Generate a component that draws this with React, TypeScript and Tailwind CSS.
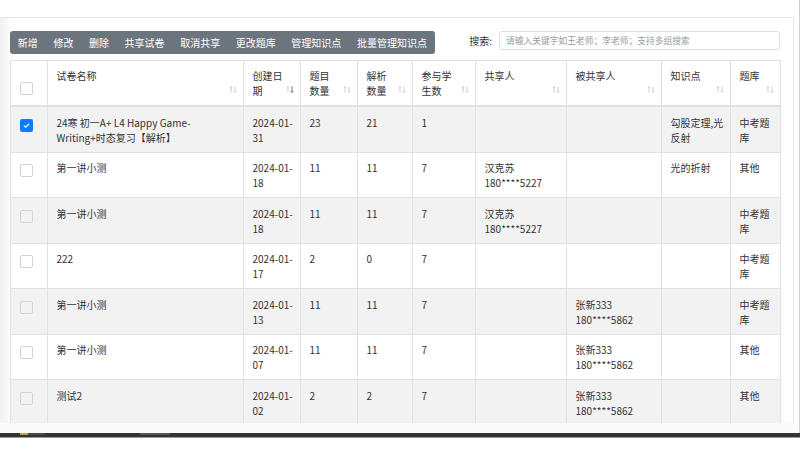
import React from 'react';

const FONT = "font-['Noto_Sans_CJK_SC','Noto_Sans',sans-serif]";

const actions = ['新增', '修改', '删除', '共享试卷', '取消共享', '更改题库', '管理知识点', '批量管理知识点'];

interface Column {
  title: string[];
  width: number;
  active?: boolean;
}

const columns: Column[] = [
  { title: ['试卷名称'], width: 196 },
  { title: ['创建日', '期'], width: 57, active: true },
  { title: ['题目', '数量'], width: 57 },
  { title: ['解析', '数量'], width: 55 },
  { title: ['参与学', '生数'], width: 63 },
  { title: ['共享人'], width: 91 },
  { title: ['被共享人'], width: 95 },
  { title: ['知识点'], width: 69 },
  { title: ['题库'], width: 50 },
];

interface Row {
  checked?: boolean;
  name: string[];
  date: string;
  questions: string;
  analyses: string;
  students: string;
  sharer?: string[];
  sharee?: string[];
  points?: string[];
  bank: string[];
}

const rows: Row[] = [
  {
    checked: true,
    name: ['24寒 初一A+ L4 Happy Game-', 'Writing+时态复习【解析】'],
    date: '2024-01-31',
    questions: '23',
    analyses: '21',
    students: '1',
    points: ['勾股定理,光', '反射'],
    bank: ['中考题', '库'],
  },
  { name: ['第一讲小测'], date: '2024-01-18', questions: '11', analyses: '11', students: '7', sharer: ['汉克苏', '180****5227'], points: ['光的折射'], bank: ['其他'] },
  { name: ['第一讲小测'], date: '2024-01-18', questions: '11', analyses: '11', students: '7', sharer: ['汉克苏', '180****5227'], bank: ['中考题', '库'] },
  { name: ['222'], date: '2024-01-17', questions: '2', analyses: '0', students: '7', bank: ['中考题', '库'] },
  { name: ['第一讲小测'], date: '2024-01-13', questions: '11', analyses: '11', students: '7', sharee: ['张新333', '180****5862'], bank: ['中考题', '库'] },
  { name: ['第一讲小测'], date: '2024-01-07', questions: '11', analyses: '11', students: '7', sharee: ['张新333', '180****5862'], bank: ['其他'] },
  { name: ['测试2'], date: '2024-01-02', questions: '2', analyses: '2', students: '7', sharee: ['张新333', '180****5862'], bank: ['其他'] },
];

function SortIcon({ active }: { active?: boolean }) {
  return (
    <svg width="8" height="7" viewBox="0 0 8 7" className="shrink-0">
      <g fill="none" strokeWidth="0.8" stroke="#c4c4c4">
        <path d="M2 0.6V6.6M0.7 1.9L2 0.6L3.3 1.9" />
      </g>
      <g fill="none" strokeWidth="0.8" stroke={active ? '#555' : '#c4c4c4'}>
        <path d="M6 0.4V6.4M4.7 5.1L6 6.4L7.3 5.1" />
      </g>
    </svg>
  );
}

function Checkbox({ checked }: { checked?: boolean }) {
  if (checked) {
    return (
      <span className="flex w-[13px] h-[13px] items-center justify-center rounded-[2px] bg-[#0a7cff]">
        <svg width="9" height="9" viewBox="0 0 9 9">
          <path d="M2 4.6L3.7 6.2L7 2.9" fill="none" stroke="#fff" strokeWidth="1.3" />
        </svg>
      </span>
    );
  }
  return <span className="block w-[13px] h-[13px] rounded-[2px] border border-[#d3d3d3]" />;
}

function Lines({ lines }: { lines?: string[] }) {
  if (!lines) return null;
  return (
    <>
      {lines.map((l) => (
        <div key={l} className="whitespace-nowrap">
          {l}
        </div>
      ))}
    </>
  );
}

export default function App() {
  const td = 'border border-[#dee2e6] align-top px-[8.5px] pt-[7.5px] pb-[7px] leading-[15px]';

  return (
    <div className={`w-[800px] h-[453px] flex flex-col overflow-hidden bg-white text-[10px] text-[#333] ${FONT}`}>
      {/* top strip */}
      <div className="h-[18px] shrink-0 flex">
        <div className="w-[794px] border-b border-[#e6e6e6]" />
        <div className="flex-1 border-r border-[#cfcfcf]" />
      </div>

      <div className="h-[405px] shrink-0 flex overflow-hidden">
        <div className="w-[9px] shrink-0 bg-gradient-to-r from-[#f1f1f1] to-[#fafafa]" />

        <div className="w-[785px] shrink-0 pl-px pr-[13px] pt-[13px] border-r border-[#e6e6e6] overflow-hidden">
          <div className="flex items-start justify-between">
            <div className="flex h-[23px] items-center rounded-[3px] bg-[#6c757d] text-white">
              {actions.map((a) => (
                <button key={a} className="px-[7.8px] leading-[23px] whitespace-nowrap">
                  {a}
                </button>
              ))}
            </div>
            <div className="flex items-center gap-[7px]">
              <span>搜索:</span>
              <div className="w-[281px] h-[19px] flex items-center rounded-[3px] border border-[#dcdfe3] px-[6px] text-[8.75px] text-[#9a9a9a]">
                请输入关键字如王老师；李老师；支持多组搜索
              </div>
            </div>
          </div>

          <table className="mt-[6px] w-[770px] table-fixed border-collapse">
            <colgroup>
              <col className="w-[37px]" />
              {columns.map((c) => (
                <col key={c.title.join('')} style={{ width: c.width }} />
              ))}
            </colgroup>
            <thead>
              <tr className="border-b-2 border-[#dee2e6]">
                <th className="border border-[#dee2e6] border-b-2 align-bottom pb-[10px] pl-[9px]">
                  <Checkbox />
                </th>
                {columns.map((c) => (
                  <th
                    key={c.title.join('')}
                    className="border border-[#dee2e6] border-b-2 align-top font-normal text-left pl-[8.5px] pr-[6px] py-[7px] leading-[15px]"
                  >
                    <div className="flex justify-between h-[30px]">
                      <div>
                        <Lines lines={c.title} />
                      </div>
                      <div className="self-end mb-[5px]">
                        <SortIcon active={c.active} />
                      </div>
                    </div>
                  </th>
                ))}
              </tr>
            </thead>
            <tbody>
              {rows.map((r, i) => (
                <tr key={i} className={i % 2 === 0 ? 'bg-[#f2f2f2]' : 'bg-white'}>
                  <td className="border border-[#dee2e6] align-top pl-[9px] pt-[11.5px]">
                    <Checkbox checked={r.checked} />
                  </td>
                  <td className={td}>
                    <Lines lines={r.name} />
                  </td>
                  <td className={td}>
                    <Lines lines={[r.date.slice(0, 8), r.date.slice(8)]} />
                  </td>
                  <td className={td}>{r.questions}</td>
                  <td className={td}>{r.analyses}</td>
                  <td className={td}>{r.students}</td>
                  <td className={td}>
                    <Lines lines={r.sharer} />
                  </td>
                  <td className={td}>
                    <Lines lines={r.sharee} />
                  </td>
                  <td className={td}>
                    <Lines lines={r.points} />
                  </td>
                  <td className={td}>
                    <Lines lines={r.bank} />
                  </td>
                </tr>
              ))}
            </tbody>
          </table>
        </div>

        <div className="flex-1 border-r border-[#cfcfcf]" />
      </div>

      {/* bottom strips */}
      <div className="h-[10px] shrink-0 bg-[#fafafa] border-r border-[#cfcfcf]" />
      <div className="h-[4px] shrink-0 flex bg-[#343434]">
        <div className="ml-[20px] w-[8px] h-[2px] bg-[#b7a640]" />
        <div className="w-[17px] h-[2px] bg-[#4a4a4a]" />
        <div className="ml-[95px] w-[30px] h-[2px] bg-[#555]" />
      </div>
      <div className="h-px shrink-0 bg-[#9a9a9a]" />
      <div className="flex-1 bg-white" />
    </div>
  );
}
